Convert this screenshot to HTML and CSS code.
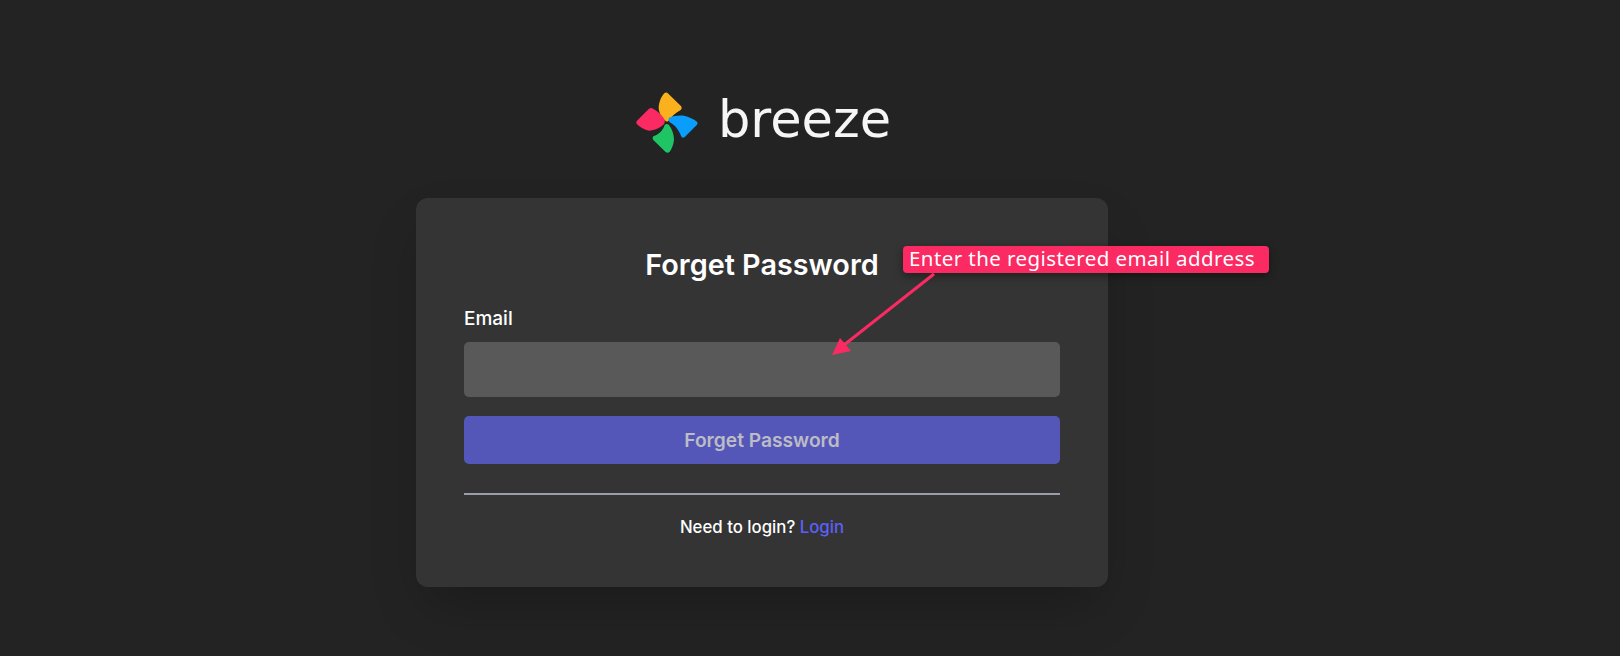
FILE: index.html
```html
<!DOCTYPE html>
<html lang="en">
<head>
    <meta charset="UTF-8">
    <meta name="viewport" content="width=device-width, initial-scale=1.0">
    <title>Forget Password</title>
    <link rel="stylesheet" href="styles.css">
</head>
<body>
    <div class="page">
        <div class="brand">
            <svg class="brand-icon" viewBox="0 0 240 225" aria-hidden="true">
                <path fill="#fbb01e" d="M110 108 C98 98 90 84 89 68 C90 50 97 34 106 25 Q112 20 118 26 L155 62 Q161 68 155 75 C140 84 128 94 118 108 Q114 111 110 108 Z"/>
                <path fill="#0a9dfb" d="M120 98 C134 92 150 90 165 92 C180 95 194 102 204 110 Q208 114 204 119 L168 155 Q162 160 157 155 C150 136 140 122 122 112 Q116 104 120 98 Z"/>
                <path fill="#1fc565" d="M120 120 C130 134 135 150 135 164 C134 178 128 192 122 200 Q116 206 109 200 L73 165 Q68 160 73 154 C90 148 102 136 107 120 Q113 114 120 120 Z"/>
                <path fill="#fb2a63" d="M24 107 L60 71 Q66 67 72 71 C86 78 98 90 106 102 Q110 110 106 116 C94 128 76 136 60 137 C46 135 34 127 24 118 Q19 112 24 107 Z"/>
            </svg>
            <span class="brand-name">breeze</span>
        </div>

        <div class="card">
            <h1>Forget Password</h1>
            <label for="email">Email</label>
            <input type="email" id="email">
            <button type="button">Forget Password</button>
            <hr>
            <p class="note">Need to login? <a href="#">Login</a></p>

            <!-- annotation on top of the form -->
            <div class="callout">Enter the registered email address</div>
            <svg class="callout-arrow" viewBox="0 0 120 100" aria-hidden="true">
                <line x1="110" y1="6" x2="20" y2="77" stroke="#fb2a63" stroke-width="3"/>
                <path fill="#fb2a63" d="M8 87 L16 70 L27 83 Z"/>
            </svg>
        </div>
    </div>
</body>
</html>
```

FILE: styles.css
```css
body {
    font-family: 'Inter', sans-serif;
    background-color: #232323;
    margin: 0;
    padding: 0;
    color: #fff;
}
.page {
    display: flex;
    flex-direction: column;
    align-items: center;
    padding-top: 85px;
    padding-right: 96px;
    height: 571px;
    overflow: hidden;
}
.brand {
    display: flex;
    align-items: center;
    height: 75px;
    margin-bottom: 38px;
    margin-right: 4px;
}
.brand-icon {
    width: 80px;
    height: 75px;
}
.brand-name {
    font-family: 'DejaVu Sans', sans-serif;
    font-size: 51px;
    line-height: 75px;
    margin-left: 9px;
    margin-bottom: 6px;
    color: #f6f6f6;
}
.card {
    position: relative;
    box-sizing: border-box;
    width: 692px;
    height: 389px;
    padding: 48px;
    background-color: #343434;
    border-radius: 12px;
    box-shadow: 0 25px 50px -12px rgba(0, 0, 0, 0.25);
}
h1 {
    font-size: 28.8px;
    font-weight: 600;
    line-height: 36px;
    text-align: center;
    margin: 1px 0 24px;
}
label {
    display: block;
    font-size: 19px;
    font-weight: 500;
    line-height: 24px;
    margin-bottom: 11px;
}
input {
    display: block;
    box-sizing: border-box;
    width: 100%;
    height: 55px;
    border: none;
    border-radius: 5px;
    background-color: #595959;
    margin-bottom: 19px;
}
button {
    display: block;
    width: 100%;
    height: 48px;
    border: none;
    border-radius: 5px;
    background-color: #5457b8;
    color: #bcbcc6;
    font-family: 'Inter', sans-serif;
    font-size: 19.2px;
    font-weight: 600;
}
hr {
    height: 2px;
    border: none;
    background-color: #9a9cab;
    margin: 29px 0 20px;
}
.note {
    font-size: 16.8px;
    font-weight: 500;
    line-height: 24px;
    text-align: center;
    margin: 0;
}
.note a {
    color: #5c60fa;
    text-decoration: none;
}
.callout {
    position: absolute;
    left: 487px;
    top: 48px;
    box-sizing: border-box;
    width: 366px;
    height: 27px;
    padding-left: 6px;
    background-color: #fb2a63;
    border-radius: 4px;
    box-shadow: 0 3px 8px rgba(0, 0, 0, 0.4);
    color: #fff;
    font-family: 'Noto Sans', sans-serif;
    font-size: 20.5px;
    letter-spacing: 0.42px;
    line-height: 24px;
    white-space: nowrap;
}
.callout-arrow {
    position: absolute;
    left: 408px;
    top: 70px;
    width: 120px;
    height: 100px;
}
```
